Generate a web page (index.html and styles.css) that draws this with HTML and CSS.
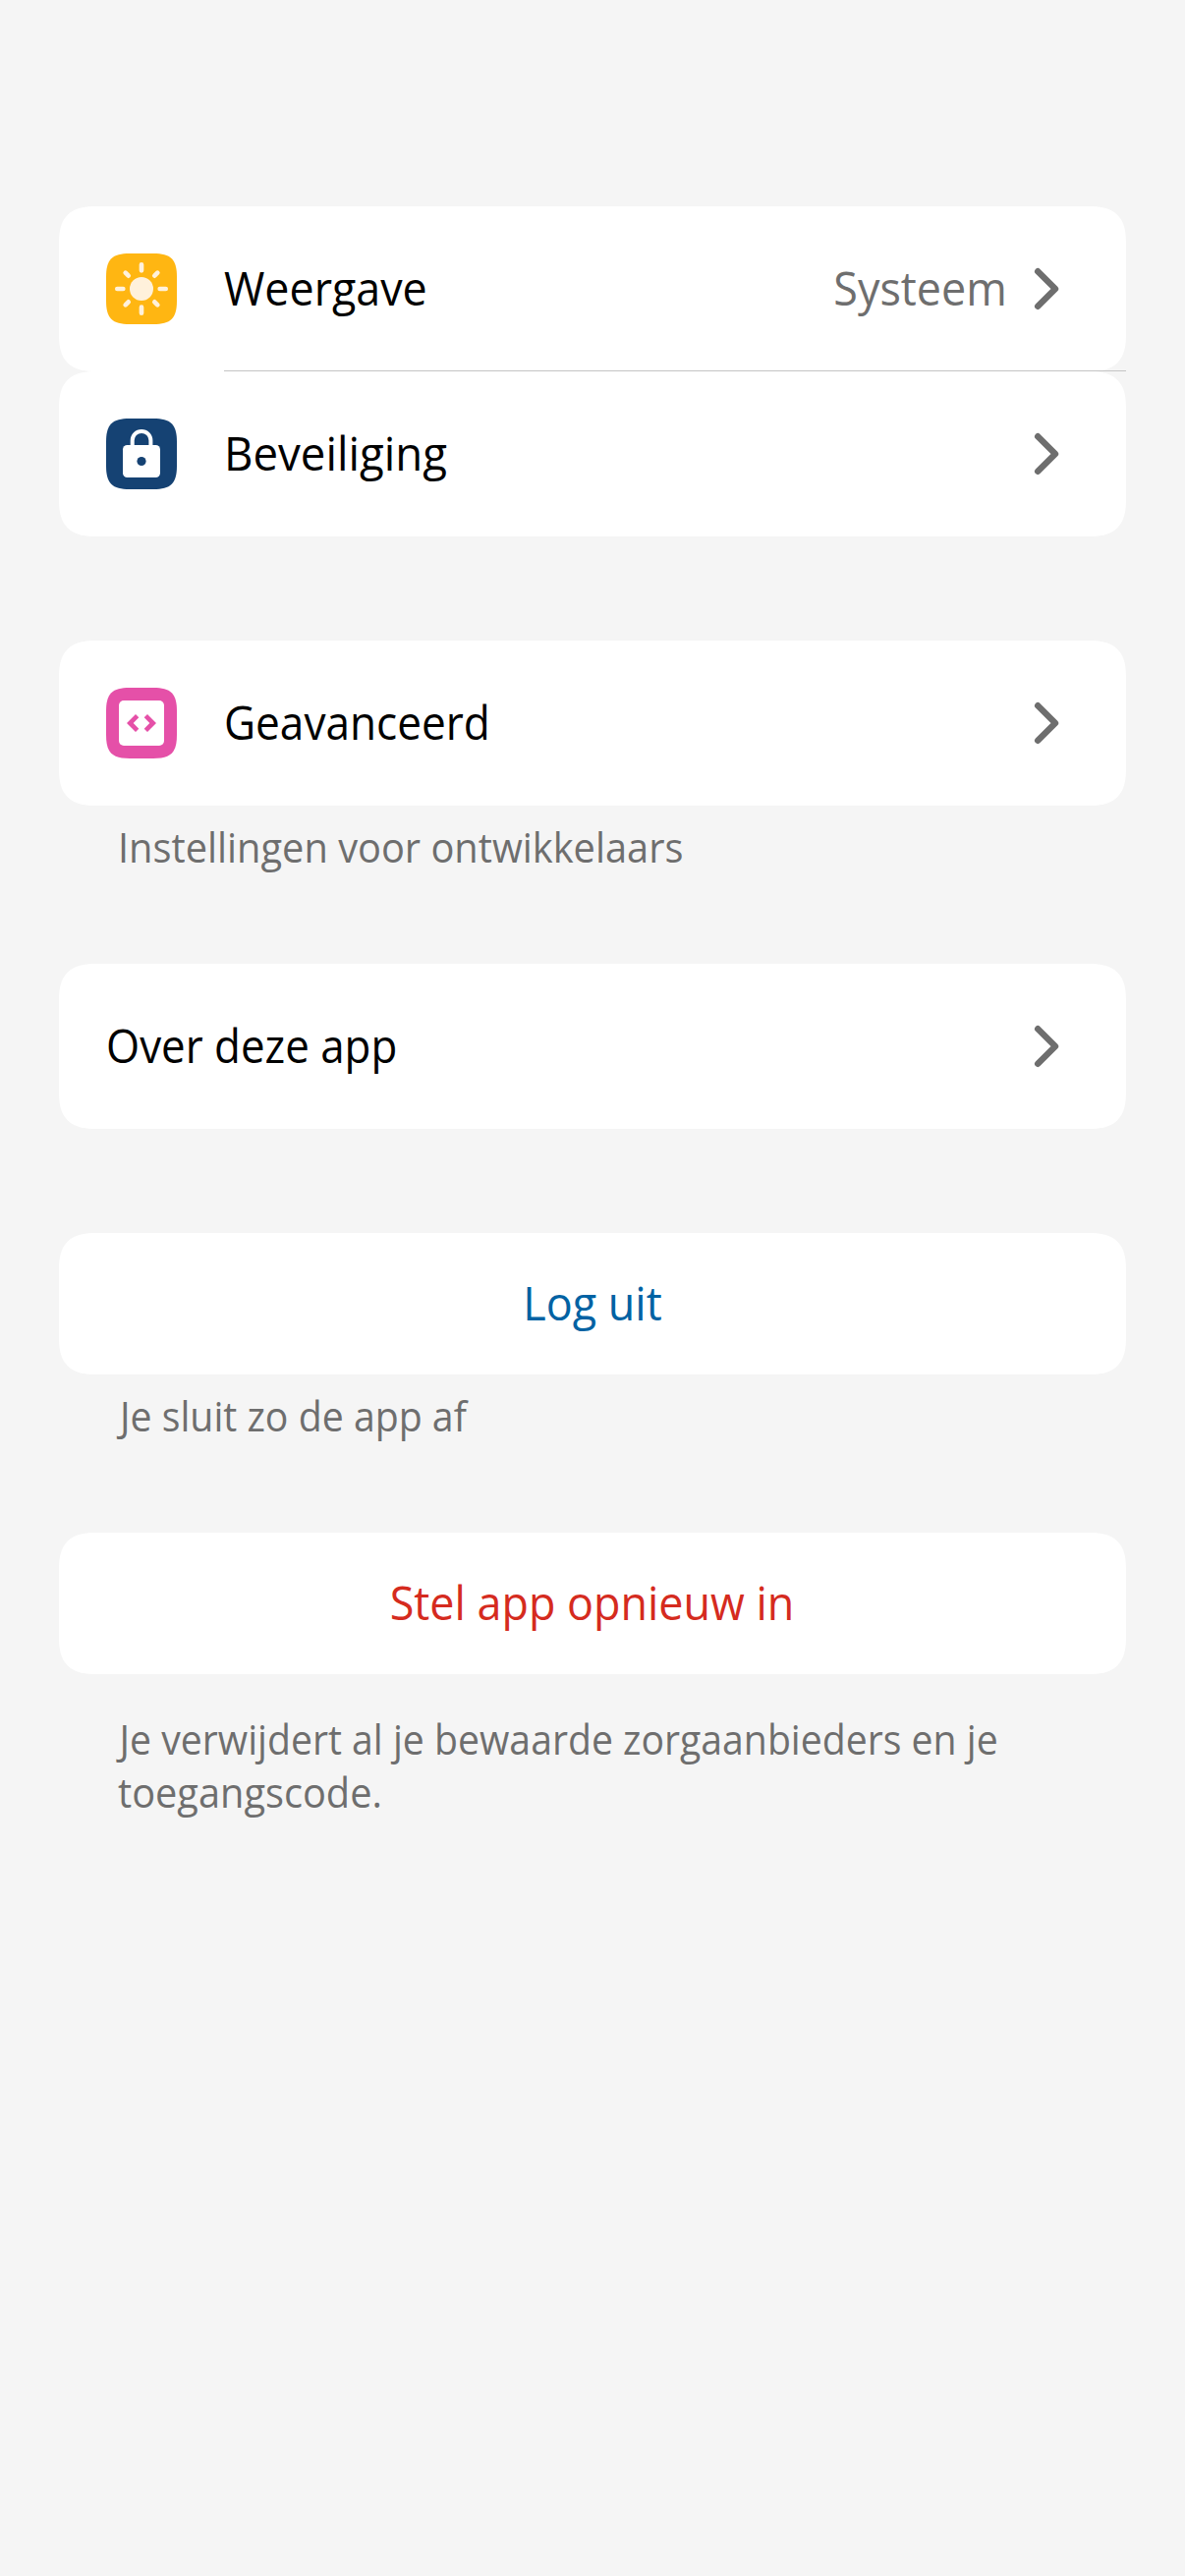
FILE: index.html
```
<!DOCTYPE html>
<html lang="nl">
<head>
<meta charset="utf-8">
<title>Instellingen</title>
<link rel="stylesheet" href="styles.css">
</head>
<body>
<svg class="defs" aria-hidden="true">
  <symbol id="tile" viewBox="0 0 72 72"><path d="M24 0H48C66 0 72 6 72 24V48C72 66 66 72 48 72H24C6 72 0 66 0 48V24C0 6 6 0 24 0Z"/></symbol>
  <symbol id="chevron" viewBox="0 0 30 48"><path d="M6.2 6.2 24 24 6.2 41.8" fill="none" stroke="currentColor" stroke-width="6.4" stroke-linecap="round" stroke-linejoin="round"/></symbol>
</svg>
<main class="page">
  <section class="group">
    <div class="row">
      <svg class="icon" viewBox="0 0 72 72">
        <use href="#tile" fill="#ffb612"/>
        <circle cx="36" cy="36" r="12" fill="#fff1db"/>
        <path d="M36 11.3V17.3M36 54.7V60.7M11.3 36H17.3M54.7 36H60.7M19.7 19.7 22.7 22.7M49.3 49.3 52.3 52.3M52.3 19.7 49.3 22.7M22.7 49.3 19.7 52.3" stroke="#fff1db" stroke-width="4.7" stroke-linecap="round"/>
      </svg>
      <span class="label"><span class="text weergave">Weergave</span></span>
      <span class="value"><span class="text systeem">Systeem</span></span>
      <svg class="chevron"><use href="#chevron"/></svg>
    </div>
    <div class="divider"></div>
    <div class="row">
      <svg class="icon" viewBox="0 0 72 72">
        <use href="#tile" fill="#154273"/>
        <path d="M26.7 29V22.3a9.35 9.35 0 0 1 18.7 0V29" fill="none" stroke="#fff" stroke-width="4"/>
        <rect x="17" y="27" width="38" height="33" rx="4.5" fill="#fff"/>
        <circle cx="36" cy="43.5" r="4.6" fill="#154273"/>
      </svg>
      <span class="label"><span class="text beveiliging">Beveiliging</span></span>
      <svg class="chevron"><use href="#chevron"/></svg>
    </div>
  </section>

  <section class="group">
    <div class="row">
      <svg class="icon" viewBox="0 0 72 72">
        <use href="#tile" fill="#e550a8"/>
        <rect x="13" y="13" width="46" height="46" rx="5" fill="#fff"/>
        <path d="M21 36 30 27 33.3 30.3 27.7 36 33.3 41.7 30 45ZM51 36 42 27 38.7 30.3 44.3 36 38.7 41.7 42 45Z" fill="#e550a8"/>
      </svg>
      <span class="label"><span class="text geavanceerd">Geavanceerd</span></span>
      <svg class="chevron"><use href="#chevron"/></svg>
    </div>
    <p class="caption"><span class="text ontwikkelaars">Instellingen voor ontwikkelaars</span></p>
  </section>

  <section class="group after-caption">
    <div class="row">
      <span class="label"><span class="text over">Over deze app</span></span>
      <svg class="chevron"><use href="#chevron"/></svg>
    </div>
  </section>

  <section class="group">
    <div class="row action logout"><span class="label"><span class="text loguit">Log uit</span></span></div>
    <p class="caption"><span class="text sluit">Je sluit zo de app af</span></p>
  </section>

  <section class="group after-caption">
    <div class="row action reset"><span class="label"><span class="text stel">Stel app opnieuw in</span></span></div>
    <p class="caption spaced"><span class="text verwijdert">Je verwijdert al je bewaarde zorgaanbieders en je</span> <span class="text toegang">toegangscode.</span></p>
  </section>
</main>
</body>
</html>
```
FILE: styles.css
```
* { box-sizing: border-box; }
body {
  margin: 0;
  background: #f5f5f5;
  color: #000;
  font: 400 47px/64px "Open Sans", "Noto Sans", sans-serif;
}
.defs { display: none; }
.page {
  display: flex;
  flex-direction: column;
  min-height: 2622px;
  padding: 210px 60px 0;
}
.group { display: flex; flex-direction: column; }
.group + .group { margin-top: 106px; }
.group + .after-caption { margin-top: 92px; }
.row {
  display: flex;
  align-items: center;
  height: 168px;
  padding: 0 66px 0 48px;
  background: #fff;
  border-radius: 30px;
}
@supports (corner-shape: superellipse(1.4)) {
  .row { border-radius: 38px; corner-shape: superellipse(1.4); }
}
.divider { height: 1px; margin: -1px 0 0 168px; background: #c4c4c4; }
.icon { width: 72px; height: 72px; margin-right: 48px; flex: none; }
.label { flex: 1; padding-bottom: 3px; }
.value { margin-right: 25px; padding-bottom: 3px; color: #6e6e6e; }
.chevron { width: 30px; height: 48px; flex: none; color: #6e6e6e; }
.action { height: 144px; padding: 0; text-align: center; }
.logout { color: #0062a3; }
.reset { color: #d52b1e; }
.caption {
  margin: 15px 0 0;
  padding-left: 60px;
  font-size: 42px;
  line-height: 54px;
  color: #6e6e6e;
}
.spaced { margin-top: 39px; }

/* Slightly narrowed letterforms */
.text { display: inline-block; vertical-align: top; white-space: nowrap; transform-origin: left; }
.weergave { transform: scaleX(0.953); }
.systeem { transform: scaleX(0.955); transform-origin: right; }
.beveiliging { transform: scaleX(0.97); }
.geavanceerd { transform: scaleX(0.939); }
.over { transform: scaleX(0.934); }
.loguit { transform: scaleX(0.955); transform-origin: center; }
.stel { transform: scaleX(0.955); transform-origin: center; }
.ontwikkelaars { transform: scaleX(0.947); }
.sluit { transform: translateX(2px) scaleX(0.934); }
.verwijdert { transform: translateX(1.5px) scaleX(0.933); }
.toegang { transform: scaleX(0.946); }
```
